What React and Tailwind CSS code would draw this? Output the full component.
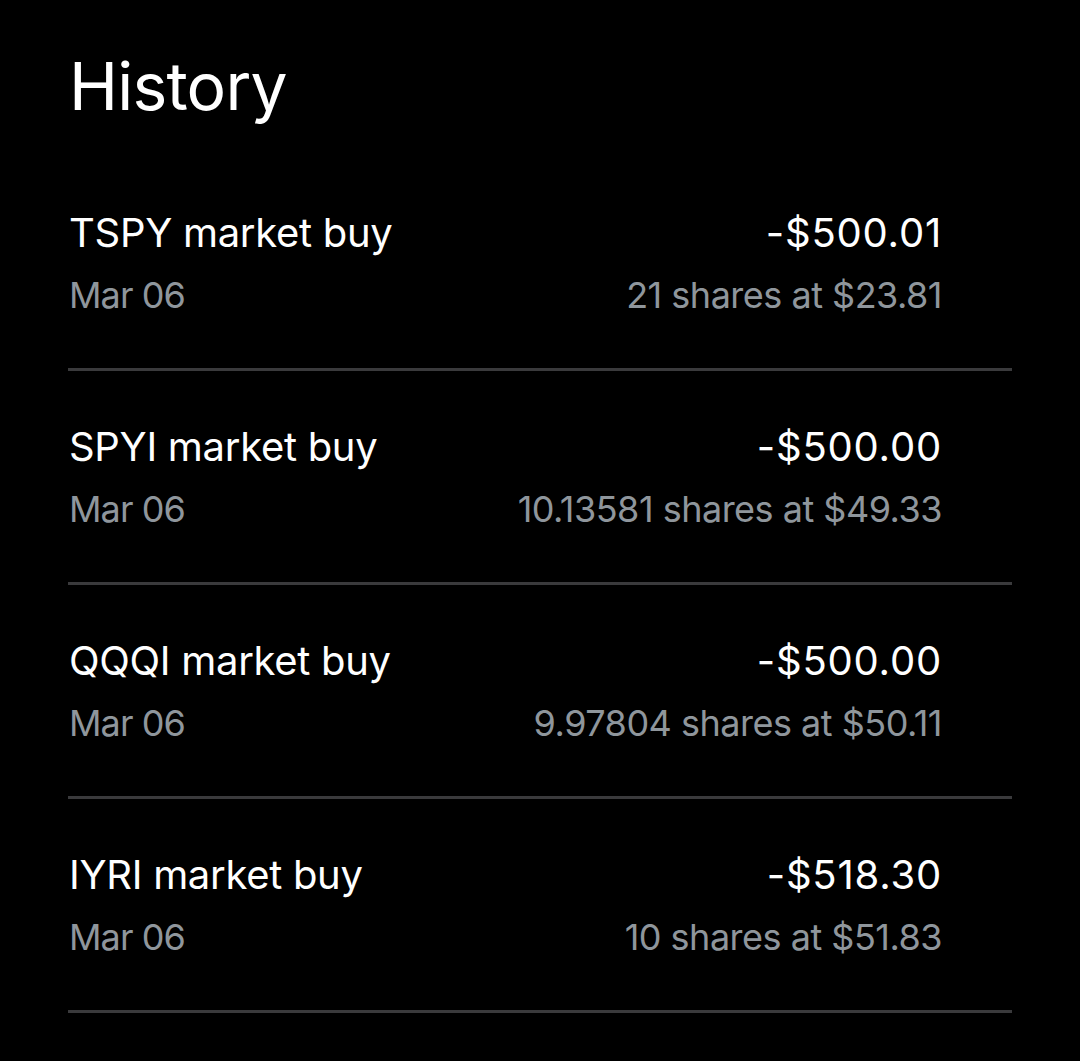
export default function App() {
  const rows = [
    { t: "TSPY market buy", a: "-$500.01", s: "21 shares at $23.81" },
    { t: "SPYI market buy", a: "-$500.00", s: "10.13581 shares at $49.33" },
    { t: "QQQI market buy", a: "-$500.00", s: "9.97804 shares at $50.11" },
    { t: "IYRI market buy", a: "-$518.30", s: "10 shares at $51.83" },
  ];
  return (
    <div
      className="w-[1080px] h-[1061px] bg-black text-white overflow-hidden"
      style={{ fontFamily: "Inter, 'Noto Sans', sans-serif" }}
    >
      <div className="pl-[68px] w-[1012px] pt-[53px]">
        <h1 className="text-[66px] leading-[66px] font-normal pl-[1px] mb-[38px] tracking-[-0.8px]">History</h1>
        {rows.map((r, i) => (
          <div key={i}>
            <div className="pt-[52px] pb-[51px] pl-[1px] pr-[70px] flex justify-between">
              <div className="flex flex-col gap-[16px]">
                <div className="text-[40px] leading-[48px] tracking-[-0.3px]">{r.t}</div>
                <div className="text-[36px] leading-[44px] text-[#8f969c] tracking-[-0.9px]">Mar 06</div>
              </div>
              <div className="flex flex-col gap-[16px] items-end">
                <div className="text-[40px] leading-[48px] tracking-[0.8px]">{r.a}</div>
                <div className="text-[36px] leading-[44px] text-[#8f969c] tracking-[-0.5px]">{r.s}</div>
              </div>
            </div>
            <div className="h-[3px] bg-[#3a3a3c]" />
          </div>
        ))}
      </div>
    </div>
  );
}
